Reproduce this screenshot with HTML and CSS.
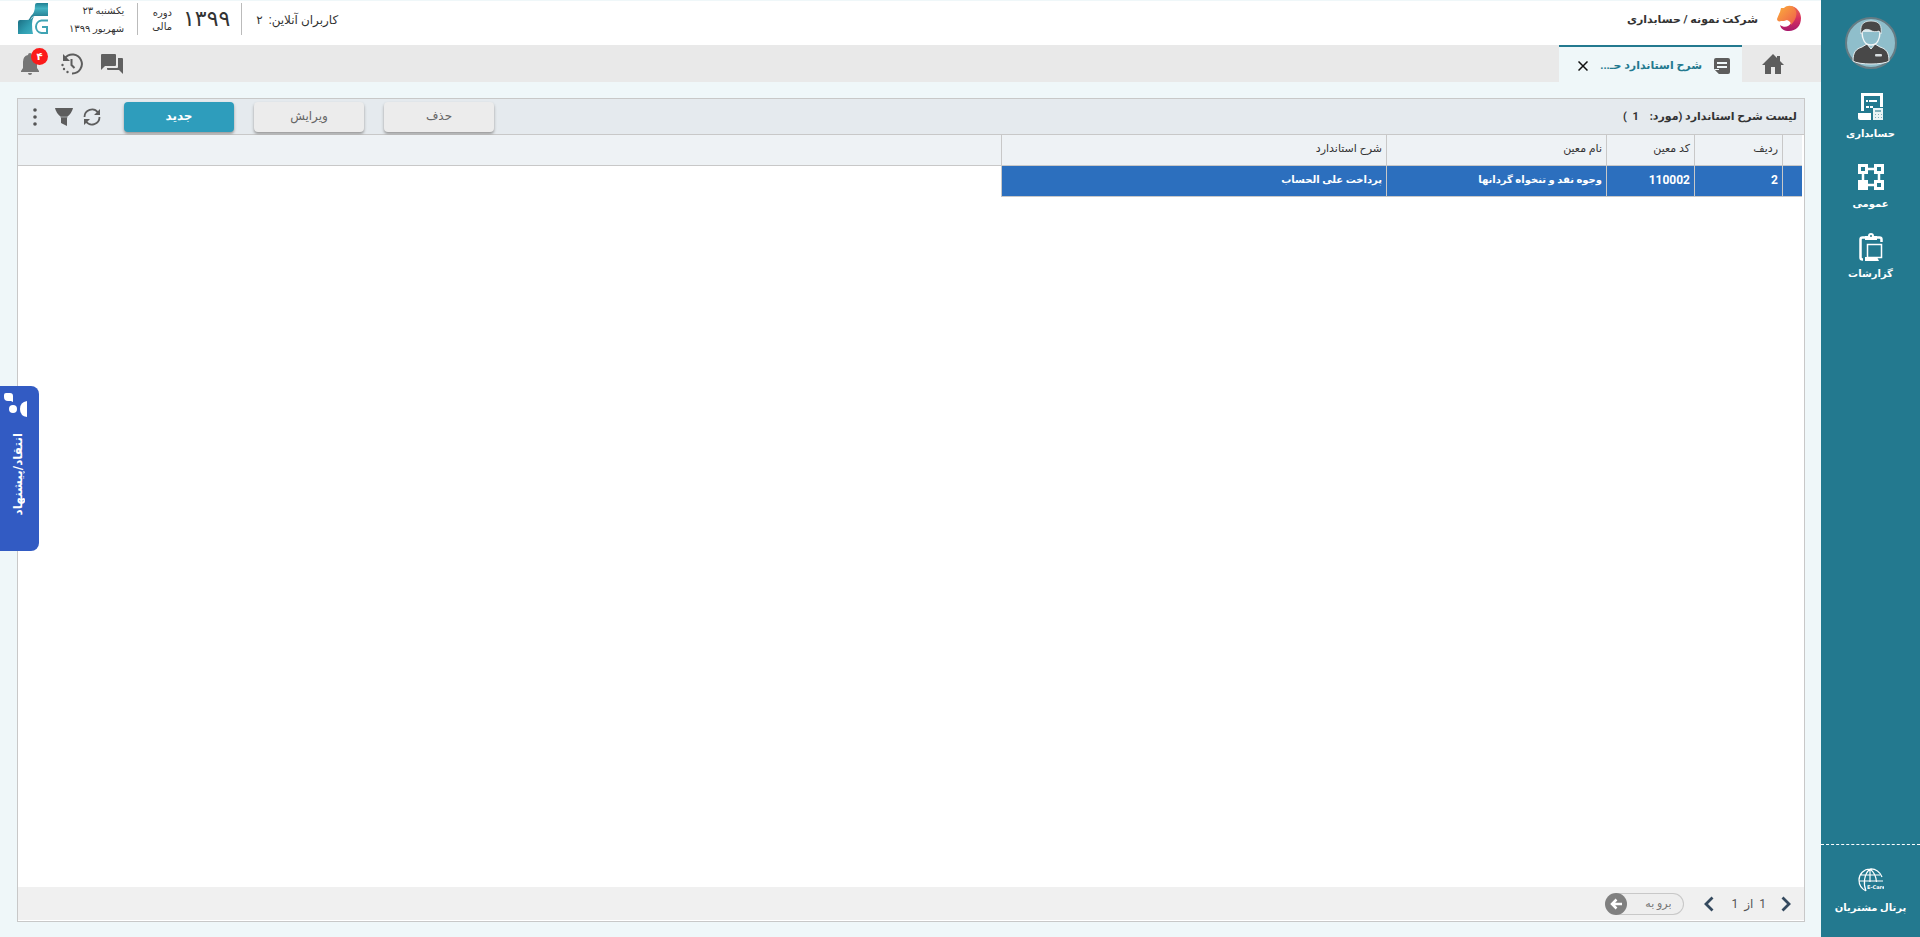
FILE: index.html
```html
<!DOCTYPE html>
<html lang="fa" dir="rtl">
<head>
<meta charset="utf-8">
<title>شرح استاندارد حساب</title>
<link rel="stylesheet" href="styles.css">
</head>
<body>
<div class="app">
  <nav class="sidebar">
    <button class="avatar" aria-label="کاربر">
      <svg viewBox="0 0 52 52" width="52" height="52">
        <circle cx="26" cy="26" r="25" fill="#8fbecb" stroke="#667c84" stroke-width="2"/>
        <path d="M8 44c0-9 3-12 9-14l5-3 4 5 4-5 5 3c6 2 9 5 9 14-5 4-31 4-36 0z" fill="#484848" stroke="#e6eef0" stroke-width="1"/>
        <path d="M17 14c0 8 3 14 9 14s9-6 9-14z" fill="#8fbecb" stroke="#f2f6f7" stroke-width="1.500"/>
        <path d="M16 17c-1-8 1-13 10-13s11 5 10 13l-2-3c-3 1-6 1-9-1-3-1-5-1-7 1z" fill="#484848" stroke="#e6eef0" stroke-width=".8"/>
        <rect x="30" y="37" width="7" height="2.500" rx="1" fill="#d8dee0"/>
      </svg>
    </button>
    <a class="side-item" href="#">
      <svg viewBox="0 0 26 28" width="26" height="28" fill="#fff">
        <path d="M3 0h22v14h-3V3H6v15H3z"/>
        <path d="M8 7h2v2H8zm3 0h8v2h-8zM8 13h3v2H8zm4 0h3v2h-3zM0 20h13v7H2a2 2 0 0 1-2-2z"/>
        <path d="M15 15h10v12H15z" fill="#e9f3f5"/>
        <path d="M17 17h6v2h-6zm0 4h1v1h-1zm3 0h1v1h-1zm3 0h1v1h-1zm-6 3h1v1h-1zm3 0h1v1h-1zm3 0h1v1h-1z" fill="#7fb0bc"/>
      </svg>
      <span>حسابداری</span>
    </a>
    <a class="side-item" href="#">
      <svg viewBox="0 0 26 28" width="26" height="28" fill="none" stroke="#fff" stroke-width="3">
        <path d="M1.500 2.500h7v7h-7zM17.500 2.500h7v7h-7zM17.500 18.500h7v7h-7z"/>
        <path d="M0 17h10v10H0z" fill="#fff" stroke="none"/>
        <path d="M10 6h6M5 11v6M21 11v6M10 22h6" stroke-width="2.500"/>
      </svg>
      <span>عمومی</span>
    </a>
    <a class="side-item" href="#">
      <svg viewBox="0 0 26 28" width="26" height="28" fill="#fff">
        <path d="M7 3h3a3 3 0 0 1 6 0h3v4H7zM13 2a1 1 0 1 0 0 2 1 1 0 0 0 0-2z" fill-rule="evenodd"/>
        <path d="M7 4.500H4.500A2 2 0 0 0 2.500 6.500v18A2 2 0 0 0 4.500 26.500H5M19 4.500h2.500A2 2 0 0 1 23.500 6.500V9" fill="none" stroke="#fff" stroke-width="2.500"/>
        <path d="M9.500 11.500h14v13h-14z" fill="none" stroke="#fff" stroke-width="1.500"/>
        <path d="M7 24h12l2 4H7z"/>
      </svg>
      <span>گزارشات</span>
    </a>
    <div class="side-foot">
      <a class="side-item" href="#">
        <svg viewBox="0 0 26 24" width="26" height="24">
          <path d="M24 9A11.500 11.500 0 0 0 12 1 11 11 0 0 0 1 12c0 5 3 9 7 11M12 1C6 6 5 16 8 23M12 1v13M12 1c4 3 6 6 6.500 13M3 7h19M1 13h24" fill="none" stroke="#fff" stroke-width="1.200"/>
          <text x="9" y="21" class="care">E-Care</text>
        </svg>
        <span>پرتال مشتریان</span>
      </a>
    </div>
  </nav>

  <div class="main">
    <header class="topbar">
      <svg class="lion" viewBox="0 0 24 27" width="24" height="27">
        <defs>
          <linearGradient id="face" x1="0" y1="0" x2="1" y2="1"><stop offset="0" stop-color="#fbb03b"/><stop offset="1" stop-color="#ee5a4c"/></linearGradient>
          <linearGradient id="mane" x1="0" y1="0" x2="0" y2="1"><stop offset="0" stop-color="#ef6d4a"/><stop offset=".5" stop-color="#d8305f"/><stop offset="1" stop-color="#a8186c"/></linearGradient>
        </defs>
        <path d="M11 1C19 0 24 7 24 13c0 8-5 13-12 13-5 0-8-2-9-6 4 3 9 2 11-2z" fill="url(#mane)"/>
        <path d="M0 14C1 11 2 9 3 7L4 3l3 0C10 0 16 0 18 4c3 5 1 11-4 16 0-3-2-4-4-5-2 1-4 1-6 1-2 1-4 0-4-2z" fill="url(#face)"/>
      </svg>
      <h1 class="company">شرکت نمونه / حسابداری</h1>
      <div class="online">کاربران آنلاین: &nbsp;۲</div>
      <div class="period"><span class="year">۱۳۹۹</span><span class="period-label">دوره<br>مالی</span></div>
      <div class="date">یکشنبه ۲۳<br>شهریور ۱۳۹۹</div>
      <svg class="brand" viewBox="0 0 30 31" width="30" height="31">
        <defs>
          <linearGradient id="teal" x1="0" y1="0" x2="0" y2="1"><stop offset="0" stop-color="#1f7f92"/><stop offset=".3" stop-color="#43b3c3"/><stop offset="1" stop-color="#17657a"/></linearGradient>
          <linearGradient id="teal2" x1="0" y1="0" x2="1" y2="1"><stop offset="0" stop-color="#17657a"/><stop offset=".6" stop-color="#2f9db0"/><stop offset="1" stop-color="#43b3c3"/></linearGradient>
        </defs>
        <path d="M19 0h11v13H17q-3 0-5 4l-2 1 3-5q4-3 4-11 0-2 2-2z" fill="url(#teal)"/>
        <path d="M2 17h7q4 0 6-3l1-1q-2 4-2 8 0 6 1 10H0V19q0-2 2-2z" fill="url(#teal2)"/>
        <path d="M30 17.500h-6.500a6.300 6.300 0 0 0 0 12.500H29v-6h-5" fill="none" stroke="#3fa3b3" stroke-width="2"/>
      </svg>
    </header>

    <div class="tabbar">
      <button class="icon-btn home" aria-label="خانه">
        <svg viewBox="0 0 22 20" width="22" height="20" fill="#5d5d5d"><path d="M11 0L0 11h3v9h6v-7h4v7h6v-9h3l-4-4V2h-3v2z"/></svg>
      </button>
      <div class="tab">
        <svg viewBox="0 0 16 16" width="16" height="16"><path d="M2 0h12q2 0 2 2v12q0 2-2 2H5l-5-5V2q0-2 2-2z" fill="#5d5d5d"/><path d="M3 4h10v2H3zm0 4h10v2H3zM0 11h5v5z" fill="#eff7f9"/><path d="M1 12h4v4z" fill="#5d5d5d"/></svg>
        <a href="#">شرح استاندارد حـ...</a>
        <button class="icon-btn" aria-label="بستن"><svg viewBox="0 0 10 10" width="10" height="10"><path d="M.5.5l9 9M9.500.5l-9 9" stroke="#111" stroke-width="1.500"/></svg></button>
      </div>
      <div class="tools">
        <button class="icon-btn" aria-label="گفتگو">
          <svg viewBox="0 0 22 20" width="22" height="20" fill="#606060"><path d="M1 0h13q1 0 1 1v10q0 1-1 1H4l-4 4V1q0-1 1-1zM17 4h4q1 0 1 1v15l-4-4H7q-1 0-1-1v-1h10q1 0 1-1z"/></svg>
        </button>
        <button class="icon-btn" aria-label="تاریخچه">
          <svg viewBox="0 0 22 22" width="22" height="22"><path d="M4 5A9.500 9.500 0 1 1 11 20.500" fill="none" stroke="#5d5d5d" stroke-width="2"/><path d="M10.500 6v6l3 3" fill="none" stroke="#5d5d5d" stroke-width="2"/><path d="M2 1v7h7z" fill="#5d5d5d"/><g fill="#5d5d5d"><circle cx="1.500" cy="12" r="1.200"/><circle cx="3" cy="16" r="1.200"/><circle cx="6.500" cy="19" r="1.200"/></g></svg>
        </button>
        <button class="icon-btn bell" aria-label="اعلان‌ها">
          <svg viewBox="0 0 18 22" width="18" height="22" fill="#757575"><path d="M9 0q2 0 2 2 5 1 5 7v6l2 3v1H0v-1l2-3V9q0-6 5-7 0-2 2-2zM7 20h4q0 2-2 2t-2-2z"/></svg>
          <span class="badge">۴</span>
        </button>
      </div>
    </div>

    <main class="content">
      <section class="panel">
        <div class="toolbar">
          <h2>لیست شرح استاندارد (مورد: &nbsp;&nbsp; 1 &nbsp;)</h2>
          <div class="actions">
            <button class="btn">حذف</button>
            <button class="btn">ویرایش</button>
            <button class="btn primary">جدید</button>
          </div>
          <div class="icons">
            <button class="icon-btn" aria-label="بازخوانی"><svg viewBox="0 0 18 18" width="18" height="18"><path d="M1.500 9A7.500 7.500 0 0 1 15 4.500M16.500 9A7.500 7.500 0 0 1 3 13.500" fill="none" stroke="#5d5d5d" stroke-width="1.800"/><path d="M17 1v6h-6zM1 17v-6h6z" fill="#5d5d5d"/></svg></button>
            <button class="icon-btn" aria-label="فیلتر"><svg viewBox="0 0 18 18" width="18" height="18"><path d="M0 0h18q-1 5-6 9v9l-6-3V9Q1 5 0 0z" fill="#5d5d5d"/><path d="M5 9h8" stroke="#a5a8aa"/></svg></button>
            <button class="icon-btn dots" aria-label="بیشتر"><svg viewBox="0 0 4 18" width="4" height="18" fill="#555"><circle cx="2" cy="2" r="1.800"/><circle cx="2" cy="9" r="1.800"/><circle cx="2" cy="16" r="1.800"/></svg></button>
          </div>
        </div>
        <div class="grid">
          <table>
            <colgroup><col class="c-mark"><col class="c-code"><col class="c-code"><col class="c-name"><col class="c-desc"><col></colgroup>
            <thead><tr><th></th><th>ردیف</th><th>کد معین</th><th>نام معین</th><th>شرح استاندارد</th><th></th></tr></thead>
            <tbody><tr><td></td><td class="num">2</td><td class="num">110002</td><td>وجوه نقد و تنخواه گردانها</td><td>پرداخت علی الحساب</td><td class="rest"></td></tr></tbody>
          </table>
        </div>
        <div class="pager">
          <button class="icon-btn" aria-label="صفحه قبل"><svg viewBox="0 0 10 16" width="10" height="16"><path d="M1.500 1.500L8 8l-6.500 6.500" fill="none" stroke="#34495e" stroke-width="2.800"/></svg></button>
          <span class="pages">1 &nbsp;از&nbsp; 1</span>
          <button class="icon-btn" aria-label="صفحه بعد"><svg viewBox="0 0 10 16" width="10" height="16"><path d="M8.500 1.500L2 8l6.500 6.500" fill="none" stroke="#34495e" stroke-width="2.800"/></svg></button>
          <div class="goto">
            <input type="text" placeholder="برو به" aria-label="برو به">
            <button class="go" aria-label="برو"><svg viewBox="0 0 12 12" width="12" height="12"><path d="M12 6H2M6.500 1.500L2 6l4.500 4.500" fill="none" stroke="#fff" stroke-width="2.500"/></svg></button>
          </div>
        </div>
      </section>
    </main>
  </div>
</div>
<button class="feedback">
  <svg viewBox="0 0 24 24" width="24" height="24" fill="#fff"><path d="M2 0h4q3 0 3 3v6L7 8H4Q0 8 0 4V2q0-2 2-2z"/><circle cx="9" cy="16" r="4"/><path d="M23 8v16q-7-1-7-8t7-8z"/></svg>
  <span>انتقاد/پیشنهاد</span>
</button>
</body>
</html>
```
FILE: styles.css
```css
* { box-sizing: border-box; }
body {
  margin: 0;
  font-family: Roboto, "DejaVu Sans", sans-serif;
  font-size: 11px;
  line-height: 16px;
  color: #333;
  background: #eff7f9;
}
h1, h2 { margin: 0; font-size: 11px; font-weight: bold; }
a { color: inherit; text-decoration: none; }
button, input { font: inherit; color: inherit; }
svg { display: block; flex: none; }
.app { display: flex; min-height: 100vh; }

.sidebar {
  flex: none;
  width: 99px;
  display: flex;
  flex-direction: column;
  align-items: center;
  padding-top: 17px;
  background: #23798f;
  color: #fff;
}
.avatar { padding: 0; border: 0; background: none; margin-bottom: 24px; }
.side-item {
  display: flex;
  flex-direction: column;
  align-items: center;
  gap: 5px;
  margin-bottom: 21px;
  font-weight: bold;
  font-size: 10px;
}
.side-foot {
  align-self: stretch;
  margin-top: auto;
  padding-top: 23px;
  border-top: 1px dashed #fff;
}
.care { font: bold 5px "DejaVu Sans", sans-serif; fill: #fff; direction: ltr; }
.side-foot .side-item { gap: 8px; }

.main { flex: 1; min-width: 0; display: flex; flex-direction: column; }
.topbar {
  display: flex;
  align-items: flex-start;
  height: 45px;
  padding: 2px 20px 0 18px;
  background: #fff;
  border-top: 1px solid #eff7f9;
}
.lion { margin-top: 2px; }
.company { margin: 9px 19px 0 auto; }
.online { padding: 9px 0 0 14px; height: 32px; border-left: 1px solid #bbb; font-size: 12px; }
.period { display: flex; gap: 11px; height: 32px; padding: 0 11px 0 14px; border-left: 1px solid #bbb; }
.year { font-size: 22px; line-height: 32px; }
.period-label, .date { font-size: 10px; }
.period-label { line-height: 14px; padding-top: 3px; }
.date { line-height: 18px; margin: -1px 13px 0 21px; }

.icon-btn { display: flex; padding: 0; border: 0; background: none; }
.tabbar {
  display: flex;
  height: 37px;
  background: #e9e9e9;
}
.home { align-self: center; margin: 0 37px 0 20px; }
.tab {
  display: flex;
  align-items: center;
  width: 183px;
  padding: 2px 12px 0 20px;
  gap: 12px;
  background: #eff7f9;
  border-top: 2px solid #23798f;
  color: #23798f;
  font-weight: bold;
  white-space: nowrap;
}
.tab .icon-btn { margin-right: auto; }
.tools { display: flex; align-items: center; gap: 18px; margin: 0 auto 0 21px; }
.tools .bell { position: relative; margin-right: 4px; }
.badge {
  position: absolute;
  left: 10px;
  top: -5px;
  width: 17px;
  height: 17px;
  border-radius: 50%;
  background: #fb1a1a;
  color: #fff;
  font-size: 10px;
  font-weight: bold;
  line-height: 17px;
}

.content { flex: 1; display: flex; padding: 16px 16px 15px 17px; }
.panel {
  flex: 1;
  min-width: 0;
  display: flex;
  flex-direction: column;
  padding-bottom: 1px;
  border: 1px solid #c8c8c8;
  background: #fff;
}
.toolbar {
  display: flex;
  align-items: center;
  height: 36px;
  padding: 0 7px 0 15px;
  background: #e5eaee;
  border-bottom: 1px solid #c8c8c8;
}
.actions { display: flex; gap: 20px; margin: 0 auto 0 23px; }
.btn {
  width: 110px;
  height: 30px;
  padding: 0 0 2px;
  border: 0;
  border-radius: 4px;
  background: #ececec;
  color: #666;
  font-size: 12px;
  box-shadow: 0 2px 3px #999;
}
.primary { background: #2e9dbc; color: #fff; font-weight: bold; }
.icons { display: flex; align-items: center; gap: 10px; }
.dots { margin-right: 8px; }

.grid { flex: 1; padding-right: 2px; }
table { width: 100%; table-layout: fixed; border-collapse: separate; border-spacing: 0; }
.c-mark { width: 20px; }
.c-code { width: 88px; }
.c-name { width: 220px; }
.c-desc { width: 385px; }
th, td {
  height: 31px;
  padding: 0 4px 2px;
  text-align: right;
  border-left: 1px solid #c8c8c8;
  border-bottom: 1px solid #c8c8c8;
}
th { background: #eef2f5; font-weight: normal; font-size: 11px; }
td { background: #2c6fbe; color: #fff; font-weight: bold; font-size: 10px; }
.num { font-size: 12px; }
th:last-child, td:last-child { border-left: 0; }
.rest { background: #fff; border-bottom: 0; }

.pager {
  display: flex;
  align-items: center;
  height: 33px;
  padding: 0 13px;
  background: #f0f0f0;
}
.pages { margin: 0 15px 0 17px; font-size: 12px; color: #555; }
.goto { display: flex; align-items: center; margin-right: 20px; }
.goto input {
  width: 68px;
  height: 22px;
  padding: 0 12px;
  border: 1px solid #c8c8c8;
  border-left: 0;
  border-radius: 0 11px 11px 0;
  background: #eee;
}
.goto input::placeholder { color: #777; opacity: 1; }
.go {
  display: flex;
  align-items: center;
  justify-content: center;
  width: 22px;
  height: 22px;
  margin-right: -11px;
  padding: 0;
  border: 0;
  border-radius: 50%;
  background: #808080;
}

.feedback {
  position: fixed;
  left: 0;
  top: 386px;
  width: 39px;
  height: 165px;
  display: flex;
  flex-direction: column;
  align-items: flex-end;
  justify-content: flex-start;
  gap: 16px;
  padding: 7px 4px;
  border: 0;
  border-radius: 0 8px 8px 0;
  background: #325bc3;
  color: #fff;
  font-weight: bold;
  font-size: 12px;
}
.feedback span { writing-mode: vertical-rl; transform: rotate(180deg); margin-left: 6px; }
```
